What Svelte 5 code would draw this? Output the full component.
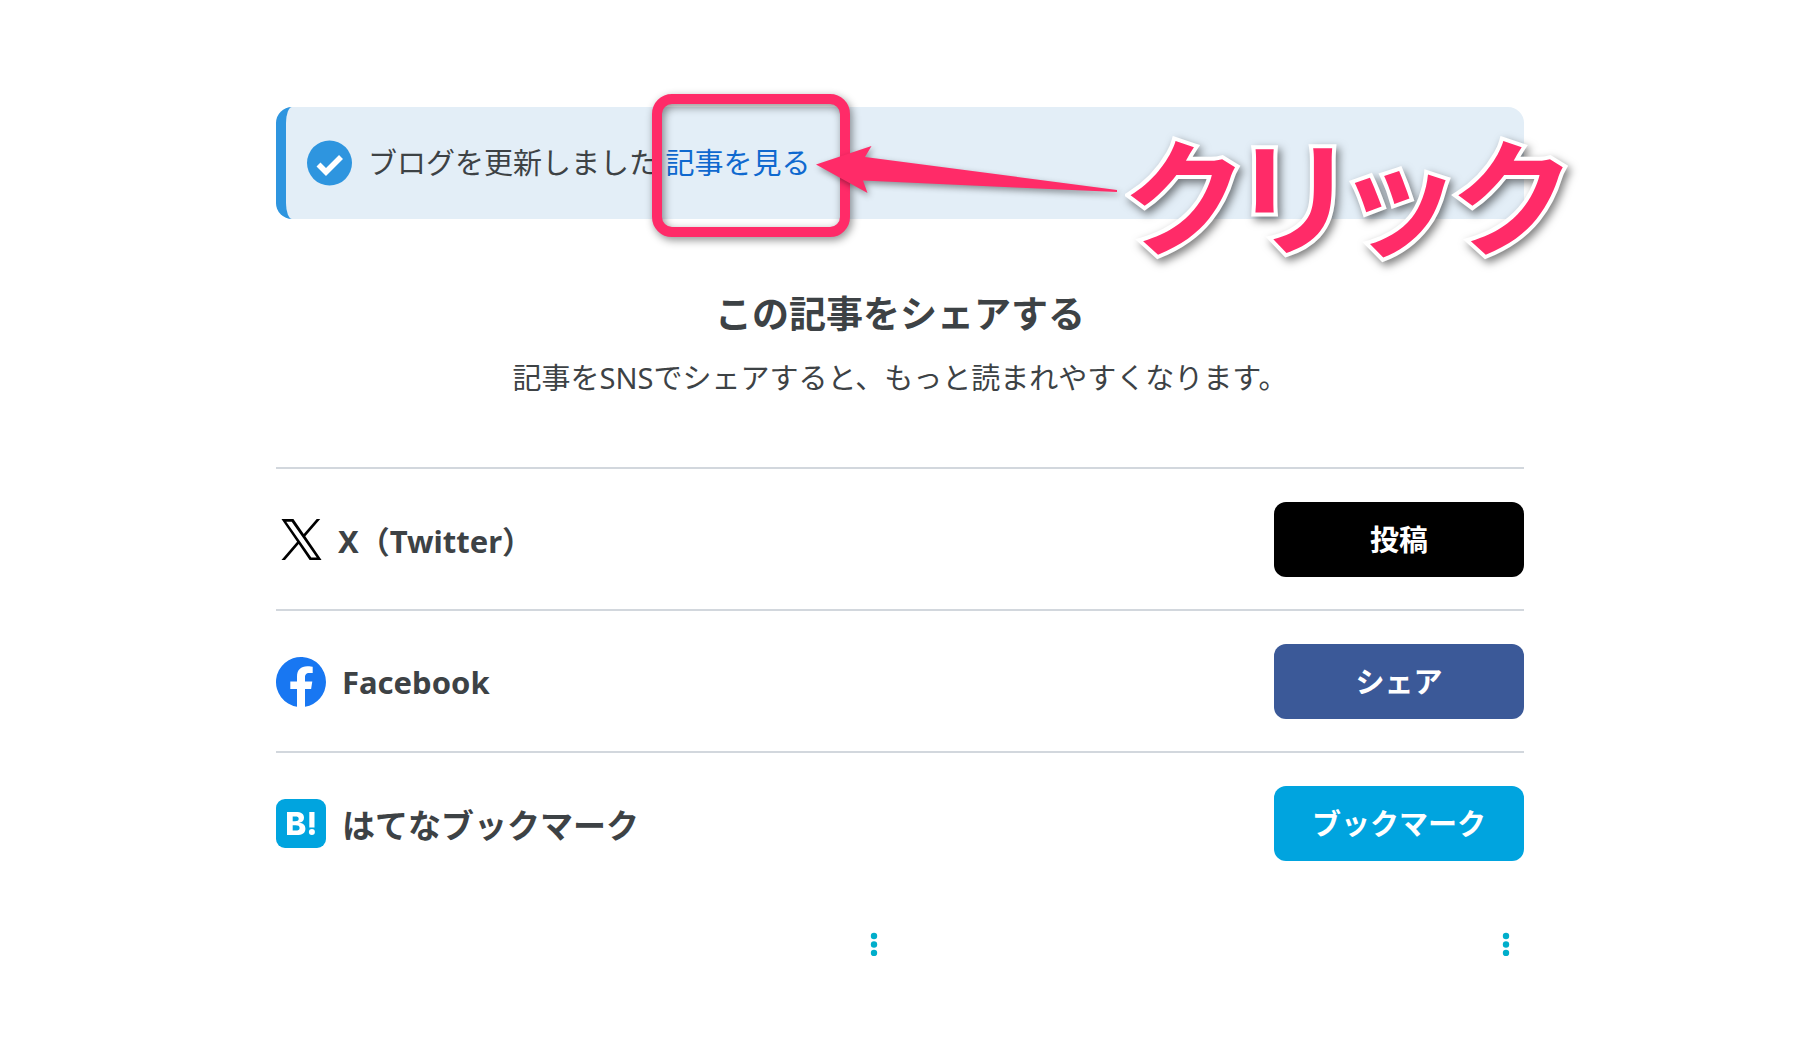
<script lang="ts">
  type Service = {
    id: string;
    name: string;
    action: string;
  };

  const services: Service[] = [
    { id: 'x', name: 'X（Twitter）', action: '投稿' },
    { id: 'facebook', name: 'Facebook', action: 'シェア' },
    { id: 'hatena', name: 'はてなブックマーク', action: 'ブックマーク' }
  ];

  const cards = [1, 2];
</script>

<main>
  <div class="notice" role="status">
    <svg class="check" viewBox="0 0 45 45" aria-hidden="true">
      <circle cx="22.5" cy="22" r="22.5" fill="#2e95df" />
      <path d="M11.5 23.5 L19 31 L34 16" fill="none" stroke="#fff" stroke-width="5.6" />
    </svg>
    <p>ブログを更新しました <a href="#entry">記事を見る</a></p>

    <div class="frame"></div>
    <svg class="arrow" viewBox="0 0 304 50" aria-hidden="true">
      <path d="M0 18.5 L55.5 0 L49 11 L301 44 L301 46 L47 34.5 L51.5 47 Z" fill="#ff2b68" />
    </svg>
    <strong class="callout">クリック</strong>
  </div>

  <header>
    <h1>この記事をシェアする</h1>
    <p>記事をSNSでシェアすると、もっと読まれやすくなります。</p>
  </header>

  <ul class="services">
    {#each services as service}
      <li>
        {#if service.id === 'x'}
          <svg class="icon-x" viewBox="0 0 1200 1227" aria-hidden="true">
            <path d="M714.163 519.284L1160.89 0H1055.03L667.137 450.887L357.328 0H0L468.492 681.821L0 1226.37H105.866L515.491 750.218L842.672 1226.37H1200L714.137 519.284H714.163ZM569.165 687.828L521.697 619.934L144.011 79.6944H306.615L611.412 515.685L658.88 583.579L1055.08 1150.3H892.476L569.165 687.854V687.828Z" />
          </svg>
        {:else if service.id === 'facebook'}
          <svg class="icon" viewBox="0 0 50 50" aria-hidden="true">
            <path
              d="M50 25 A25 25 0 1 0 21 49.7 V32 H14.3 V24.5 H21 V19.5 C21 12.8 25 9.2 31.2 9.2 C34 9.2 36.7 9.7 36.7 9.7 V16 H33.3 C30 16 29 18 29 20.1 V24.5 H36.3 L35.1 32 H29 V49.7 A25 25 0 0 0 50 25 Z"
              fill="#1877f2"
            />
          </svg>
        {:else}
          <svg class="icon" viewBox="0 0 50 50" aria-hidden="true">
            <rect width="50" height="49" rx="9" fill="#00a4df" />
            <path
              fill="#fff"
              fill-rule="evenodd"
              d="M11 13 H19.5 C25.5 13 28 15 28 18.7 C28 21.7 26.2 23.4 23 23.8 C27 24.1 29.4 26.3 29.4 29.7 C29.4 34 26.3 36 20.5 36 H11 Z M16.7 17.4 V22.2 H19 C21.5 22.2 22.7 21.5 22.7 19.7 C22.7 18 21.6 17.4 19 17.4 Z M16.7 26.3 V31.6 H19.5 C22.3 31.6 23.6 30.8 23.6 28.9 C23.6 27 22.3 26.3 19.5 26.3 Z"
            />
            <path d="M33.3 13 H38.5 V28.5 H33.3 Z" fill="#fff" />
            <circle cx="35.9" cy="33" r="3" fill="#fff" />
          </svg>
        {/if}
        <span class="name" class:latin={service.id !== 'hatena'}>{service.name}</span>
        <button class="share {service.id}">{service.action}</button>
      </li>
    {/each}
  </ul>

  <div class="cards">
    {#each cards as card}
      <button class="more" aria-label="メニュー">
        <svg viewBox="0 0 6 23" aria-hidden="true">
          <circle cx="3" cy="3" r="3.2" />
          <circle cx="3" cy="11.5" r="3.2" />
          <circle cx="3" cy="20" r="3.2" />
        </svg>
      </button>
    {/each}
  </div>
</main>

<style>
  :global(body) {
    background: #fff;
    color: #3d4245;
    font-family: 'Noto Sans', 'Noto Sans CJK JP', sans-serif;
    font-size: 29px;
    padding-right: 5px;
  }

  main {
    max-width: 1248px;
    margin: 0 auto;
    padding-top: 107px;
  }

  h1,
  p,
  ul {
    margin: 0;
    padding: 0;
  }

  .notice {
    position: relative;
    display: flex;
    align-items: center;
    gap: 16px;
    box-sizing: border-box;
    height: 112px;
    padding: 0 21px;
    border-left: 10px solid #2e95df;
    border-radius: 16px;
    background: #e3eef7;
  }

  .check {
    width: 45px;
    height: 45px;
    overflow: visible;
  }

  .notice p {
    line-height: 44px;
  }

  .notice a {
    color: #0f69cf;
    text-decoration: none;
  }

  .frame {
    position: absolute;
    top: -13px;
    left: 366px;
    box-sizing: border-box;
    width: 198px;
    height: 143px;
    border: 10px solid #ff2b68;
    border-radius: 20px;
    filter: drop-shadow(2px 3px 4px rgba(0, 0, 0, 0.45));
  }

  .arrow {
    position: absolute;
    top: 39px;
    left: 530px;
    width: 304px;
    height: 50px;
    overflow: visible;
    filter: drop-shadow(2px 3px 3px rgba(0, 0, 0, 0.4));
  }

  .callout {
    position: absolute;
    top: -6px;
    right: -42px;
    color: #ff2b68;
    font-family: 'Noto Sans CJK JP', sans-serif;
    font-size: 126px;
    font-weight: 700;
    font-feature-settings: 'palt';
    line-height: 180px;
    white-space: nowrap;
    -webkit-text-stroke: 8px #fff;
    paint-order: stroke fill;
    filter: drop-shadow(3px 4px 4px rgba(0, 0, 0, 0.5));
  }

  header {
    padding: 67px 0;
    text-align: center;
  }

  h1 {
    font-size: 37px;
    line-height: 56px;
  }

  header p {
    padding-top: 14px;
    line-height: 44px;
  }

  .services {
    list-style: none;
  }

  .services li {
    display: flex;
    align-items: center;
    gap: 16px;
    padding: 33px 0 32px;
    border-top: 2px solid #d2d7dd;
  }

  .icon {
    width: 50px;
    height: 50px;
  }

  .icon-x {
    width: 41px;
    height: 41px;
    padding-left: 5px;
  }

  .name {
    flex: 1;
    font-size: 33px;
    font-weight: 700;
  }

  .name.latin {
    font-size: 31px;
  }

  .share {
    width: 250px;
    height: 75px;
    padding: 0 0 3px;
    border: 0;
    border-radius: 12px;
    color: #fff;
    font: inherit;
    font-weight: 700;
    cursor: pointer;
  }

  .share.x {
    background: #000;
  }

  .share.facebook {
    background: #3b5998;
  }

  .share.hatena {
    background: #00a4df;
  }

  .cards {
    display: grid;
    grid-template-columns: 1fr 1fr;
    gap: 16px;
    padding-top: 40px;
  }

  .more {
    justify-self: end;
    padding: 0 15px;
    border: 0;
    background: none;
    cursor: pointer;
  }

  .more svg {
    display: block;
    width: 6px;
    height: 23px;
    overflow: visible;
    fill: #00aecb;
  }
</style>
